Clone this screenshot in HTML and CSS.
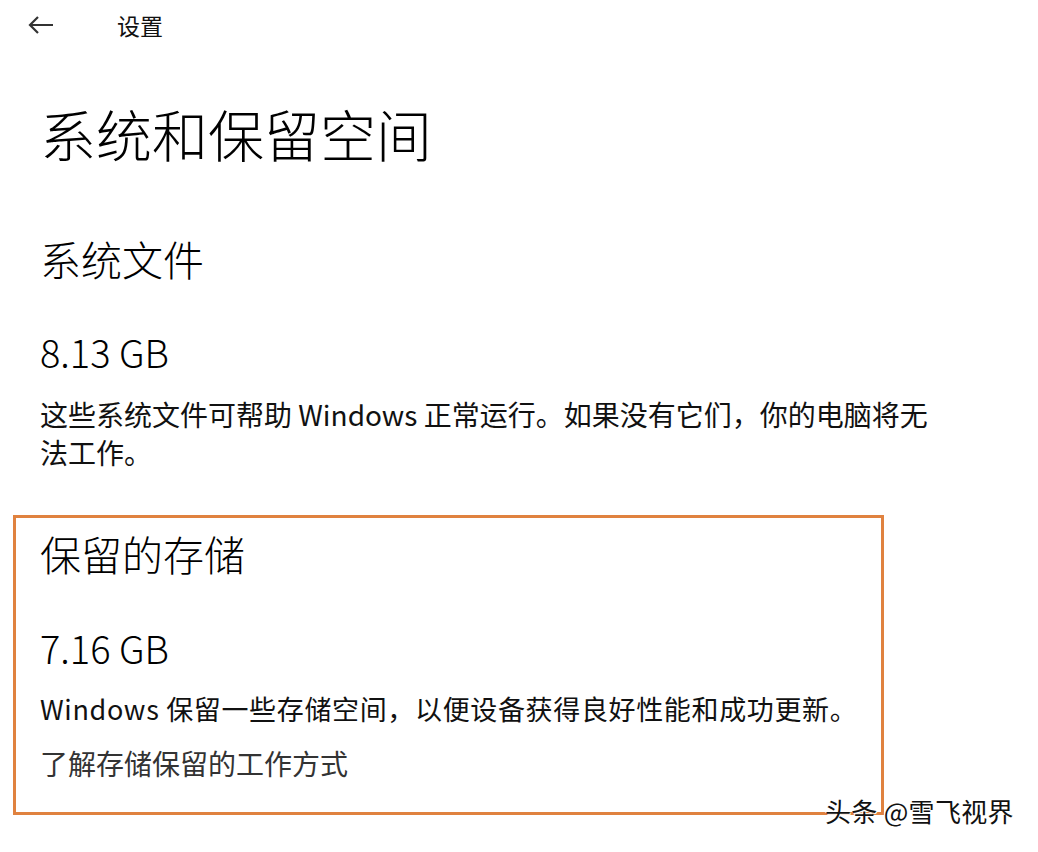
FILE: index.html
```html
<!DOCTYPE html>
<html lang="zh-CN">
<head>
    <meta charset="UTF-8">
    <meta name="viewport" content="width=device-width, initial-scale=1.0">
    <title>设置</title>
    <link rel="stylesheet" href="styles.css">
</head>
<body>
    <div class="header">
        <span class="back">
            <svg width="26" height="20" viewBox="0 0 26 20">
                <path d="M25 10 H2 M10 2 L2 10 L10 18" fill="none" stroke="#333" stroke-width="2.2"/>
            </svg>
        </span>
        <span class="app-name">设置</span>
    </div>
    <div class="page">
        <h1 class="title">系统和保留空间</h1>

        <h2 class="section-title">系统文件</h2>
        <div class="size">8.13 GB</div>
        <p class="desc">这些系统文件可帮助 Windows 正常运行。如果没有它们，你的电脑将无法工作。</p>

        <div class="reserved">
            <h2 class="section-title first">保留的存储</h2>
            <div class="size">7.16 GB</div>
            <p class="desc">Windows 保留一些存储空间，以便设备获得良好性能和成功更新。</p>
            <a class="more" href="#">了解存储保留的工作方式</a>
        </div>
    </div>
    <div class="watermark">头条 @雪飞视界</div>
</body>
</html>
```

FILE: styles.css
```css
body {
    margin: 0;
    background-color: #ffffff;
    color: #000000;
    font-family: "Noto Sans CJK SC", "Noto Sans", sans-serif;
    width: 1038px;
    height: 852px;
    overflow: hidden;
    position: relative;
}
.header {
    height: 50px;
    display: flex;
    align-items: center;
}
.back {
    display: flex;
    margin-left: 28px;
}
.app-name {
    margin-left: 63px;
    font-size: 23px;
    color: #111;
}
.page {
    padding: 0 40px;
}
.title {
    margin: 48px 0 0 0;
    font-size: 56px;
    line-height: 70px;
    font-weight: 300;
}
.section-title {
    margin: 65px 0 0 0;
    font-size: 41px;
    line-height: 50px;
    font-weight: 300;
}
.section-title.first {
    margin-top: 0;
}
.size {
    margin-top: 46px;
    font-size: 38px;
    line-height: 46px;
    font-weight: 300;
}
.desc {
    margin: 20px 0 0 0;
    width: 900px;
    font-size: 28px;
    line-height: 38px;
    color: #111;
}
.reserved {
    margin: 44px 0 0 -27px;
    width: 871px;
    box-sizing: border-box;
    border: 3px solid #e0823f;
    padding: 10px 10px 30px 24px;
}
.reserved .size {
    margin-top: 47px;
}
.reserved .desc {
    margin-top: 19px;
    width: auto;
    font-size: 27px;
    letter-spacing: 0.65px;
    white-space: nowrap;
}
.more {
    display: block;
    margin-top: 16px;
    font-size: 28px;
    line-height: 38px;
    color: #333;
    text-decoration: none;
}
.watermark {
    position: absolute;
    left: 825px;
    top: 794px;
    font-size: 26px;
    line-height: 34px;
    letter-spacing: 0.3px;
    color: #111;
    text-shadow: 1px 1px 0 #fff, -1px -1px 0 #fff;
}
```
